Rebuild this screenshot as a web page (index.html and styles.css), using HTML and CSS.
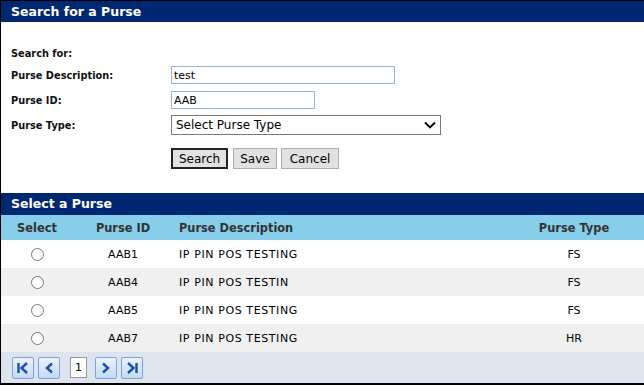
FILE: index.html
```html
<!DOCTYPE html>
<html>
<head>
<meta charset="utf-8">
<link rel="stylesheet" href="styles.css">
</head>
<body>
<div class="frame">
  <div class="bar">Search for a Purse</div>
  <div class="form">
    <div class="row lead"><span class="label">Search for:</span></div>
    <div class="row r1"><span class="label">Purse Description:</span><input class="txt w224" type="text" value="test"></div>
    <div class="row r2"><span class="label">Purse ID:</span><input class="txt w144" type="text" value="AAB"></div>
    <div class="row r3"><span class="label">Purse Type:</span>
      <div class="select"><span>Select Purse Type</span>
        <svg width="12" height="8" viewBox="0 0 12 8"><path d="M1 1.5 L6 6.5 L11 1.5" fill="none" stroke="#000" stroke-width="1.8"/></svg>
      </div>
    </div>
    <div class="row btns"><span class="label"></span>
      <button class="btn primary">Search</button><button class="btn">Save</button><button class="btn wide">Cancel</button>
    </div>
  </div>
  <div class="bar bar2">Select a Purse</div>
  <table class="grid">
    <thead>
      <tr><th class="c-sel">Select</th><th class="c-id">Purse ID</th><th class="c-desc">Purse Description</th><th class="c-type">Purse Type</th></tr>
    </thead>
    <tbody>
      <tr><td class="c-sel"><span class="radio"></span></td><td class="c-id">AAB1</td><td class="c-desc">IP PIN POS TESTING</td><td class="c-type">FS</td></tr>
      <tr class="alt"><td class="c-sel"><span class="radio"></span></td><td class="c-id">AAB4</td><td class="c-desc">IP PIN POS TESTIN</td><td class="c-type">FS</td></tr>
      <tr><td class="c-sel"><span class="radio"></span></td><td class="c-id">AAB5</td><td class="c-desc">IP PIN POS TESTING</td><td class="c-type">FS</td></tr>
      <tr class="alt"><td class="c-sel"><span class="radio"></span></td><td class="c-id">AAB7</td><td class="c-desc">IP PIN POS TESTING</td><td class="c-type">HR</td></tr>
    </tbody>
  </table>
  <div class="pager">
    <span class="pbtn"><svg width="14" height="12" viewBox="0 0 14 12"><path d="M2.5 1 V11 M11 1 L5.5 6 L11 11" fill="none" stroke="#1a4fb0" stroke-width="2.4"/></svg></span>
    <span class="pbtn"><svg width="14" height="12" viewBox="0 0 14 12"><path d="M10 1.5 L5 6 L10 10.5" fill="none" stroke="#1a4fb0" stroke-width="2.4"/></svg></span>
    <span class="page">1</span>
    <span class="pbtn"><svg width="14" height="12" viewBox="0 0 14 12"><path d="M4 1.5 L9 6 L4 10.5" fill="none" stroke="#1a4fb0" stroke-width="2.4"/></svg></span>
    <span class="pbtn"><svg width="14" height="12" viewBox="0 0 14 12"><path d="M11.5 1 V11 M3 1 L8.5 6 L3 11" fill="none" stroke="#1a4fb0" stroke-width="2.4"/></svg></span>
  </div>
</div>
</body>
</html>
```

FILE: styles.css
```css
html, body {
  margin: 0;
  padding: 0;
  background: #fff;
}
body {
  font-family: "DejaVu Sans", Verdana, sans-serif;
  font-size: 11px;
  color: #000;
}
.frame {
  width: 643px;
  height: 382px;
  border-top: 1px solid #000;
  border-left: 1px solid #000;
  border-bottom: 2px solid #000;
  display: flex;
  flex-direction: column;
  overflow: hidden;
}
.bar {
  background: #002870;
  color: #fff;
  font-weight: bold;
  font-size: 12.5px;
  height: 21px;
  line-height: 21px;
  padding-left: 10px;
}
.form {
  height: 171px;
  padding-top: 22px;
  box-sizing: border-box;
}
.row {
  display: flex;
  align-items: center;
  padding-left: 10px;
}
.label {
  font-weight: bold;
  font-size: 9.8px;
  width: 160px;
  color: #111;
}
.lead { height: 18px; }
.r1 { margin-top: 4px; height: 18px; }
.r2 { margin-top: 7px; height: 18px; }
.r3 { margin-top: 6px; height: 20px; }
.btns { margin-top: 13px; height: 21px; }
.txt {
  box-sizing: border-box;
  height: 18px;
  border: 1px solid #95b3d7;
  font-family: "DejaVu Sans", Verdana, sans-serif;
  font-size: 11px;
  padding: 0 2px;
  margin: 0;
  outline: none;
}
.w224 { width: 224px; }
.w144 { width: 144px; }
.select {
  box-sizing: border-box;
  width: 270px;
  height: 20px;
  border: 1px solid #7a7a7a;
  display: flex;
  align-items: center;
  justify-content: space-between;
  padding: 0 4px 0 4px;
  font-size: 12px;
}
.btn {
  box-sizing: border-box;
  height: 21px;
  margin: 0 4px 0 0;
  padding: 0 6px;
  border: 1px solid #adadad;
  background: #e1e1e1;
  font-family: "DejaVu Sans", Verdana, sans-serif;
  font-size: 12px;
  color: #000;
}
.btn.wide {
  padding: 0 8px;
}
.btn.primary {
  border: 2px solid #222;
  margin-right: 5px;
}
.bar2 {
  height: 22px;
  line-height: 22px;
}
.grid {
  border-collapse: collapse;
  width: 643px;
  table-layout: fixed;
}
.grid th {
  background: #87ceeb;
  color: #333;
  font-weight: bold;
  font-size: 11.4px;
  height: 25px;
  padding: 0;
}
.grid td {
  height: 28px;
  padding: 0;
}
.grid tr.alt td { background: #f0f0f0; }
.c-sel { width: 72px; text-align: center; }
.c-id { width: 100px; text-align: center; }
.c-desc { text-align: left; padding-left: 6px !important; }
td.c-desc { letter-spacing: 0.6px; }
.c-type { width: 140px; text-align: center; }
.radio {
  display: inline-block;
  width: 11px;
  height: 11px;
  border: 1px solid #777;
  border-radius: 50%;
  background: #fff;
  vertical-align: middle;
}
.pager {
  flex: 1;
  background: #dde4ee;
  display: flex;
  align-items: center;
  padding-left: 11px;
  gap: 4px;
}
.pbtn {
  box-sizing: border-box;
  width: 22px;
  height: 22px;
  border: 1px solid #7aa3d8;
  border-radius: 2px;
  background: linear-gradient(#eaf2fc, #c4d9f3);
  display: flex;
  align-items: center;
  justify-content: center;
}
.page {
  box-sizing: border-box;
  width: 17px;
  height: 21px;
  border: 1px solid #999;
  background: #fff;
  display: flex;
  align-items: center;
  justify-content: center;
  margin: 0 4px 0 6px;
  font-size: 11px;
}
```
